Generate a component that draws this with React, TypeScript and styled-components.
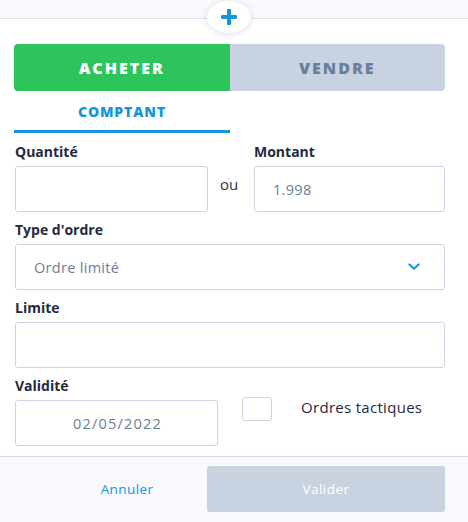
import styled, { createGlobalStyle } from "styled-components";

const GlobalStyle = createGlobalStyle`
  html, body {
    margin: 0;
    padding: 0;
    background: #ffffff;
    font-family: "Open Sans", "Liberation Sans", sans-serif;
    color: #1f2a3d;
  }
  * { box-sizing: border-box; }
`;

const App = () => {
  return (
    <Page>
      <GlobalStyle />
      <TopStrip>
        <PlusBubble>
          <svg width="16" height="16" viewBox="0 0 16 16">
            <rect x="6" y="0" width="4" height="16" rx="1" fill="#1596dc" />
            <rect x="0" y="6" width="16" height="4" rx="1" fill="#1596dc" />
          </svg>
        </PlusBubble>
      </TopStrip>

      <Body>
        <Toggle>
          <SideButton active>ACHETER</SideButton>
          <SideButton>VENDRE</SideButton>
        </Toggle>

        <Tabs>
          <Tab active>COMPTANT</Tab>
        </Tabs>

        <Row>
          <Field>
            <Label>Quantité</Label>
            <Input />
          </Field>
          <Or>ou</Or>
          <Field>
            <Label>Montant</Label>
            <Input>
              <Value>1.998</Value>
            </Input>
          </Field>
        </Row>

        <Field>
          <Label>Type d'ordre</Label>
          <Select>
            <Value>Ordre limité</Value>
            <svg width="12" height="8" viewBox="0 0 12 8">
              <path
                d="M1.5 1.5 L6 5.8 L10.5 1.5"
                fill="none"
                stroke="#1596dc"
                strokeWidth="2.2"
                strokeLinecap="round"
                strokeLinejoin="round"
              />
            </svg>
          </Select>
        </Field>

        <Field>
          <Label>Limite</Label>
          <Input />
        </Field>

        <ValidityRow>
          <DateField>
            <Label>Validité</Label>
            <Input centered>
              <DateValue>02/05/2022</DateValue>
            </Input>
          </DateField>
          <Tactic>
            <Checkbox />
            <TacticLabel>Ordres tactiques</TacticLabel>
          </Tactic>
        </ValidityRow>
      </Body>

      <Footer>
        <CancelButton>Annuler</CancelButton>
        <SubmitButton>Valider</SubmitButton>
      </Footer>
    </Page>
  );
};

const Page = styled.div`
  width: 468px;
  height: 522px;
  display: flex;
  flex-direction: column;
  background: #ffffff;
  overflow: hidden;
`;

const TopStrip = styled.div`
  height: 19px;
  flex-shrink: 0;
  background: #f7f9fc;
  border-bottom: 1px solid #dde3ed;
  display: flex;
  justify-content: center;
  padding-right: 10px;
`;

const PlusBubble = styled.div`
  width: 44px;
  height: 32px;
  margin-top: 1px;
  border-radius: 50%;
  background: #ffffff;
  box-shadow: 0 1px 6px rgba(30, 50, 90, 0.16);
  display: flex;
  align-items: center;
  justify-content: center;
  position: relative;
  z-index: 1;
`;

const Body = styled.div`
  flex: 1;
  padding: 25px 23px 0 14px;
  display: flex;
  flex-direction: column;
`;

const Toggle = styled.div`
  display: flex;
  height: 47px;
  border-radius: 4px;
  overflow: hidden;
`;

type TActive = {
  active?: boolean;
};

const SideButton = styled.div<TActive>`
  flex: 1;
  display: flex;
  align-items: center;
  justify-content: center;
  font-weight: 800;
  font-size: 16px;
  letter-spacing: 2px;
  background: ${({ active }) => (active ? "#2dc55b" : "#c9d2e0")};
  color: ${({ active }) => (active ? "#ffffff" : "#6a7e99")};
`;

const Tabs = styled.div`
  display: flex;
  margin-top: 10px;
`;

const Tab = styled.div<TActive>`
  width: 216px;
  height: 32px;
  display: flex;
  align-items: center;
  justify-content: center;
  padding-bottom: 8px;
  font-weight: 800;
  font-size: 14px;
  letter-spacing: 0.9px;
  color: #1596dc;
  border-bottom: 3px solid ${({ active }) => (active ? "#1596dc" : "transparent")};
`;

const Row = styled.div`
  display: flex;
  align-items: flex-start;
  margin-top: 10px;

  > div:first-child {
    width: 194px;
  }
  > div:last-child {
    flex: 1;
  }
`;

const Field = styled.div`
  display: flex;
  flex-direction: column;
  margin-top: 9px;
  padding-left: 1px;

  ${Row} > & {
    margin-top: 0;
  }
`;

const Label = styled.div`
  font-weight: 700;
  font-size: 14px;
  line-height: 18px;
  color: #1f2a3d;
  margin-bottom: 5px;
`;

type TInput = {
  centered?: boolean;
};

const Input = styled.div<TInput>`
  height: 46px;
  border: 1px solid #ccd5e3;
  border-radius: 3px;
  background: #ffffff;
  display: flex;
  align-items: center;
  justify-content: ${({ centered }) => (centered ? "center" : "flex-start")};
  padding: 0 18px;
`;

const Value = styled.div`
  font-size: 14.5px;
  color: #6c7d96;
  letter-spacing: 0.3px;
`;

const DateValue = styled(Value)`
  letter-spacing: 1.2px;
  padding-left: 2px;
`;

const Or = styled.div`
  width: 45px;
  padding-top: 31px;
  padding-left: 12px;
  font-size: 15px;
  color: #2a3446;
`;

const Select = styled(Input)`
  justify-content: space-between;
  padding: 0 24px 0 18px;
`;

const ValidityRow = styled.div`
  display: flex;
  align-items: flex-start;
`;

const DateField = styled(Field)`
  width: 204px;
`;

const Tactic = styled.div`
  display: flex;
  align-items: flex-start;
  margin-top: 29px;
  margin-left: 24px;
`;

const Checkbox = styled.div`
  width: 30px;
  height: 24px;
  border: 1px solid #ccd5e3;
  border-radius: 3px;
  background: #ffffff;
`;

const TacticLabel = styled.div`
  margin-left: 29px;
  font-size: 15px;
  color: #1f2a3d;
  letter-spacing: 0.3px;
`;

const Footer = styled.div`
  height: 66px;
  flex-shrink: 0;
  background: #f7f9fc;
  border-top: 1px solid #d3dbe7;
  display: flex;
  align-items: flex-start;
  padding: 9px 23px 0 15px;
`;

const CancelButton = styled.div`
  width: 192px;
  height: 46px;
  display: flex;
  align-items: center;
  justify-content: center;
  padding-left: 32px;
  font-size: 13.5px;
  color: #1596dc;
  letter-spacing: 0.4px;
`;

const SubmitButton = styled.div`
  flex: 1;
  height: 46px;
  border-radius: 3px;
  background: #c9d2e0;
  display: flex;
  align-items: center;
  justify-content: center;
  font-size: 13.5px;
  color: #ffffff;
  letter-spacing: 0.5px;
`;

export default App;
